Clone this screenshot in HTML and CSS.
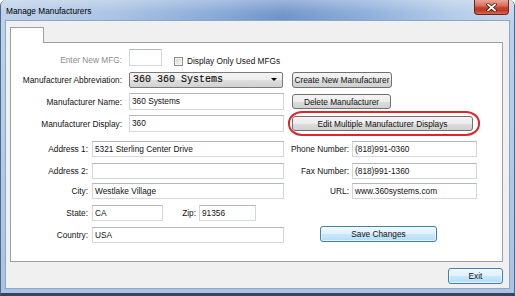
FILE: index.html
```html
<!DOCTYPE html>
<html>
<head>
<meta charset="utf-8">
<title>Manage Manufacturers</title>
<link rel="stylesheet" href="styles.css">
</head>
<body>
<div class="window">
  <div class="titlebar">
    <span class="title">Manage Manufacturers</span>
    <div class="close">
      <svg width="11" height="9" viewBox="0 0 11 9">
        <path d="M2 1.5 L9 7.5 M9 1.5 L2 7.5" stroke="#4a1a12" stroke-width="3.4" stroke-linecap="square" fill="none"/>
        <path d="M2 1.5 L9 7.5 M9 1.5 L2 7.5" stroke="#ffffff" stroke-width="1.7" stroke-linecap="square" fill="none"/>
      </svg>
    </div>
  </div>
  <div class="frame">
    <div class="client">
      <div class="tabstrip"><div class="tab"></div></div>
      <div class="page">
        <div class="row top r1">
          <span class="lbl disabled">Enter New MFG:</span>
          <div class="field w-mfg"></div>
          <div class="check-group"><span class="checkbox"></span><span>Display Only Used MFGs</span></div>
        </div>
        <div class="row top r2">
          <span class="lbl">Manufacturer Abbreviation:</span>
          <div class="combo"><span class="combo-text">360 360 Systems</span><span class="arrow"></span></div>
          <button class="btn w-create">Create New Manufacturer</button>
        </div>
        <div class="row top r3">
          <span class="lbl">Manufacturer Name:</span>
          <div class="field w-top">360 Systems</div>
          <button class="btn w-delete">Delete Manufacturer</button>
        </div>
        <div class="row top r4">
          <span class="lbl">Manufacturer Display:</span>
          <div class="field w-top">360</div>
          <div class="ring-wrap">
            <button class="btn w-edit">Edit Multiple Manufacturer Displays</button>
            <span class="ring"></span>
          </div>
        </div>
        <div class="row bot r5">
          <span class="lbl">Address 1:</span>
          <div class="field w-addr">5321 Sterling Center Drive</div>
          <span class="rlbl">Phone Number:</span>
          <div class="field w-right">(818)991-0360</div>
        </div>
        <div class="row bot r6">
          <span class="lbl">Address 2:</span>
          <div class="field w-addr"></div>
          <span class="rlbl">Fax Number:</span>
          <div class="field w-right">(818)991-1360</div>
        </div>
        <div class="row bot r7">
          <span class="lbl">City:</span>
          <div class="field w-addr">Westlake Village</div>
          <span class="rlbl">URL:</span>
          <div class="field w-right">www.360systems.com</div>
        </div>
        <div class="row bot r8">
          <span class="lbl">State:</span>
          <div class="field w-state">CA</div>
          <span class="zlbl">Zip:</span>
          <div class="field w-zip">91356</div>
        </div>
        <div class="row bot r9">
          <span class="lbl">Country:</span>
          <div class="field w-addr">USA</div>
          <button class="btn default w-save">Save Changes</button>
        </div>
      </div>
      <div class="footer">
        <button class="btn default w-exit">Exit</button>
      </div>
    </div>
  </div>
</div>
</body>
</html>
```

FILE: styles.css
```css
* { box-sizing: border-box; }

body {
  margin: 0;
  background: #ffffff;
  font-family: "Liberation Sans", Arial, sans-serif;
  font-size: 8.3px;
  color: #111111;
}

.window {
  width: 515px;
  height: 296px;
  display: flex;
  flex-direction: column;
  border: 1px solid #50698a;
  border-top: none;
  border-bottom: 3px solid #34455a;
  border-radius: 6px 6px 0 0;
  overflow: hidden;
  background: #b6cbe6;
}

.titlebar {
  height: 20px;
  flex: none;
  display: flex;
  align-items: flex-start;
  background:
    linear-gradient(180deg, rgba(255,255,255,0.3) 0%, rgba(255,255,255,0.05) 60%, rgba(255,255,255,0) 100%),
    linear-gradient(90deg, #bcd0ea 0%, #a9c2e3 22%, #86a8d6 42%, #6f93c9 55%, #8eaedb 72%, #b3cbe8 88%, #c2d5ec 100%);
}

.title {
  margin: 6px 0 0 5px;
  line-height: 10px;
  color: #000000;
}

.close {
  margin-left: auto;
  margin-right: 5px;
  width: 35px;
  height: 15px;
  border: 1px solid #6e2418;
  border-top: none;
  border-radius: 0 0 4px 4px;
  background: linear-gradient(180deg, #e8a597 0%, #d9725e 40%, #c7402a 55%, #c23a24 75%, #d76a54 100%);
  display: flex;
  align-items: center;
  justify-content: center;
}

.frame {
  flex: 1;
  display: flex;
  padding: 0 4px 4px;
  background: linear-gradient(180deg, #bcd1ea 0%, #abc3e2 100%);
}

.client {
  flex: 1;
  display: flex;
  flex-direction: column;
  background: #f0f0f0;
  border: 1px solid #8ea6c6;
  padding: 6px 6px 0 4px;
}

.tabstrip {
  height: 15px;
  flex: none;
  display: flex;
}

.tab {
  width: 34px;
  height: 16px;
  background: #ffffff;
  border: 1px solid #9c9fa6;
  border-bottom: none;
  position: relative;
  z-index: 1;
}

.page {
  height: 220px;
  flex: none;
  background: #ffffff;
  border: 1px solid #9c9fa6;
  padding-top: 6px;
}

.row {
  display: flex;
  align-items: center;
  height: 17px;
}

.row.bot { height: 16px; }

.r2, .r3, .r4 { margin-top: 5px; }
.r5 { margin-top: 9px; }
.r6 { margin-top: 6px; }
.r7 { margin-top: 4px; }
.r8, .r9 { margin-top: 6px; }

.lbl {
  flex: none;
  text-align: right;
  white-space: nowrap;
}

.top .lbl { width: 111px; margin-right: 7px; }
.bot .lbl { width: 77px; margin-right: 4px; }

.disabled { color: #8c8c8c; }
.r1 .lbl { margin-top: 4px; }

.rlbl {
  flex: none;
  width: 65px;
  margin-right: 3px;
  text-align: right;
  white-space: nowrap;
}

.zlbl {
  flex: none;
  width: 33px;
  margin-right: 3px;
  text-align: right;
}

.field {
  flex: none;
  height: 100%;
  background: #ffffff;
  border: 1px solid #d3d6db;
  border-top-color: #b3b6bc;
  padding-left: 2px;
  line-height: 14px;
  white-space: nowrap;
  overflow: hidden;
}

.w-mfg { width: 33px; }
.w-top { width: 155px; }
.w-addr { width: 192px; }
.w-right { width: 125px; }
.w-state { width: 71px; }
.w-zip { width: 57px; }

.check-group {
  display: flex;
  align-items: center;
  align-self: flex-end;
  margin-left: 12px;
  height: 10px;
  white-space: nowrap;
}

.checkbox {
  width: 9px;
  height: 9px;
  margin-right: 4px;
  border: 1px solid #8f8f8f;
  background: linear-gradient(135deg, #d2d2d2 0%, #eeeeee 70%, #f8f8f8 100%);
  box-shadow: inset 0 0 0 1px #f4f4f4;
}

.combo {
  flex: none;
  width: 154px;
  height: 16px;
  display: flex;
  align-items: center;
  border: 1px solid #7a7a7a;
  border-radius: 2px;
  background: linear-gradient(180deg, #f4f4f4 0%, #ececec 50%, #dedede 51%, #d2d2d2 100%);
  padding-left: 3px;
}

.combo-text {
  font-family: "Liberation Mono", "Courier New", monospace;
  font-size: 10px;
  color: #000000;
  white-space: pre;
  -webkit-text-stroke: 0.08px #000000;
}

.arrow {
  margin-left: auto;
  margin-right: 5px;
  width: 0;
  height: 0;
  border-left: 3px solid transparent;
  border-right: 3px solid transparent;
  border-top: 3px solid #000000;
}

.btn {
  flex: none;
  height: 16px;
  padding: 0;
  border: 1px solid #707070;
  border-radius: 3px;
  background: linear-gradient(180deg, #f4f4f4 0%, #ececec 50%, #dddddd 51%, #d0d0d0 100%);
  font-family: "Liberation Sans", Arial, sans-serif;
  font-size: 8.3px;
  color: #111111;
  text-align: center;
  line-height: 14px;
  white-space: nowrap;
}

.btn.default {
  border-color: #3c7fb1;
  background: linear-gradient(180deg, #eef7fd 0%, #e0f1fc 50%, #c8e8fb 51%, #b6ddf5 100%);
  box-shadow: inset 0 0 0 1px rgba(255,255,255,0.6);
}

.w-create { width: 100px; margin-left: 9px; }
.w-delete { width: 99px; height: 15px; margin-left: 8px; }

.ring-wrap {
  flex: none;
  position: relative;
  margin-left: 8px;
  display: flex;
}

.w-edit { width: 181px; height: 15px; }

.ring {
  position: absolute;
  left: -4px;
  right: -7px;
  top: -5px;
  bottom: -5px;
  border: 2px solid #e3232a;
  border-radius: 14px / 12px;
}

.w-save { width: 117px; margin-left: 36px; margin-top: -2px; }

.footer {
  display: flex;
  justify-content: flex-end;
  margin-top: 6px;
}

.w-exit { width: 55px; height: 16px; }
```
